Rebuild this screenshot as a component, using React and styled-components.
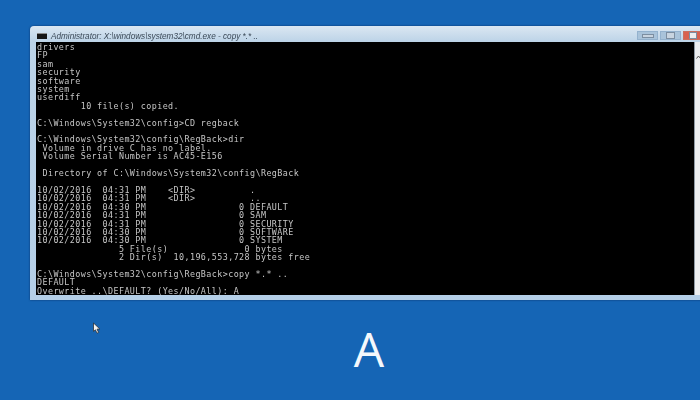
import React from 'react';
import styled, { createGlobalStyle } from 'styled-components';

const GlobalStyle = createGlobalStyle`
  html, body {
    margin: 0;
    padding: 0;
    background: #1565b5;
  }
`;

const Desktop = styled.div`
  width: 700px;
  height: 400px;
  overflow: hidden;
  position: relative;
  display: flex;
  flex-direction: column;
  padding: 26px 0 0 30px;
  box-sizing: border-box;
  background: #1565b5;
`;

const Window = styled.div`
  width: 676px;
  height: 274px;
  flex: none;
  display: flex;
  flex-direction: column;
  box-sizing: border-box;
  padding: 0 0 5px 6px;
  border-radius: 4px 4px 0 0;
  background: linear-gradient(180deg, #dbe7f2 0%, #bcd3e7 16px, #b4cfe8 100%);
  box-shadow: 0 0 2px rgba(10, 40, 90, 0.9);
`;

const TitleBar = styled.div`
  height: 16px;
  flex: none;
  display: flex;
  gap: 4px;
  padding: 0 3px 0 1px;
  filter: blur(0.4px);
`;

const TitleIcon = styled.div`
  width: 10px;
  height: 5px;
  margin-top: 7px;
  background: #161616;
  border-top: 1px solid #8a8a8a;
  flex: none;
`;

const TitleText = styled.div`
  flex: 1;
  margin-top: 4px;
  font: italic 8.2px/14px "Liberation Sans", sans-serif;
  color: #3a4856;
  white-space: nowrap;
`;

const Controls = styled.div`
  display: flex;
  gap: 2px;
  height: 9px;
  margin-top: 5px;
  filter: blur(0.4px);
`;

const Control = styled.div`
  width: ${p => (p.$close ? '20px' : '21px')};
  display: flex;
  align-items: center;
  justify-content: center;
  box-sizing: border-box;
  background: ${p => (p.$close ? '#d9614f' : '#a9c3da')};
  border: 1px solid ${p => (p.$close ? '#c9705f' : '#94b2ce')};
`;

const ControlGlyph = styled.div`
  width: ${p => p.$w}px;
  height: ${p => p.$h}px;
  background: ${p => p.$fill};
  border: 1px solid #7c8ea1;
`;

const Body = styled.div`
  flex: 1;
  min-height: 0;
  display: flex;
`;

const Console = styled.pre`
  flex: 1;
  margin: 0;
  padding: 1px 0 0 1px;
  overflow: hidden;
  background: #000;
  color: #c6c6c6;
  font: 8.4px/8.41px "DejaVu Sans Mono", monospace;
  letter-spacing: 0.42px;
  filter: blur(0.4px);
`;

const Scrollbar = styled.div`
  width: 12px;
  flex: none;
  padding: 3px 0 0 1px;
  box-sizing: border-box;
  background: #eceef0;
  border-left: 1px solid #8f9aa4;
`;

const Caption = styled.div`
  flex: 1;
  display: flex;
  justify-content: center;
  margin-left: -30px;
  padding-left: 38px;
  color: #f4f8fc;
  font: 400 48px/98px "Open Sans", sans-serif;
`;

const Pointer = styled.svg`
  position: absolute;
  left: 92px;
  top: 322px;
  filter: blur(0.3px);
`;

const lines = `drivers
FP
sam
security
software
system
userdiff
        10 file(s) copied.

C:\\Windows\\System32\\config>CD regback

C:\\Windows\\System32\\config\\RegBack>dir
 Volume in drive C has no label.
 Volume Serial Number is AC45-E156

 Directory of C:\\Windows\\System32\\config\\RegBack

10/02/2016  04:31 PM    <DIR>          .
10/02/2016  04:31 PM    <DIR>          ..
10/02/2016  04:30 PM                 0 DEFAULT
10/02/2016  04:31 PM                 0 SAM
10/02/2016  04:31 PM                 0 SECURITY
10/02/2016  04:30 PM                 0 SOFTWARE
10/02/2016  04:30 PM                 0 SYSTEM
               5 File(s)              0 bytes
               2 Dir(s)  10,196,553,728 bytes free

C:\\Windows\\System32\\config\\RegBack>copy *.* ..
DEFAULT
Overwrite ..\\DEFAULT? (Yes/No/All): A`;

const App = () => (
  <Desktop>
    <GlobalStyle />
    <Window>
      <TitleBar>
        <TitleIcon />
        <TitleText>Administrator: X:\windows\system32\cmd.exe - copy  *.* ..</TitleText>
        <Controls>
          <Control>
            <ControlGlyph $w={10} $h={2} $fill="#c8d4e0" />
          </Control>
          <Control>
            <ControlGlyph $w={7} $h={5} $fill="#c8d4e0" />
          </Control>
          <Control $close>
            <ControlGlyph $w={6} $h={5} $fill="#eee" />
          </Control>
        </Controls>
      </TitleBar>
      <Body>
        <Console>{lines}</Console>
        <Scrollbar>
          <svg width="5" height="4" viewBox="0 0 5 4">
            <path d="M0.5 3.5 L2.5 1 L4.5 3.5" fill="none" stroke="#555" strokeWidth="1" />
          </svg>
        </Scrollbar>
      </Body>
    </Window>
    <Caption>A</Caption>
    <Pointer width="10" height="13" viewBox="0 0 10 13">
      <path d="M1.5 1 L1.5 9.4 L3.4 7.8 L5 11.2 L6.6 10.4 L5 7.2 L7.8 7 Z" fill="#f2f2f2" stroke="#222" strokeWidth="0.7" />
    </Pointer>
  </Desktop>
);

export default App;
